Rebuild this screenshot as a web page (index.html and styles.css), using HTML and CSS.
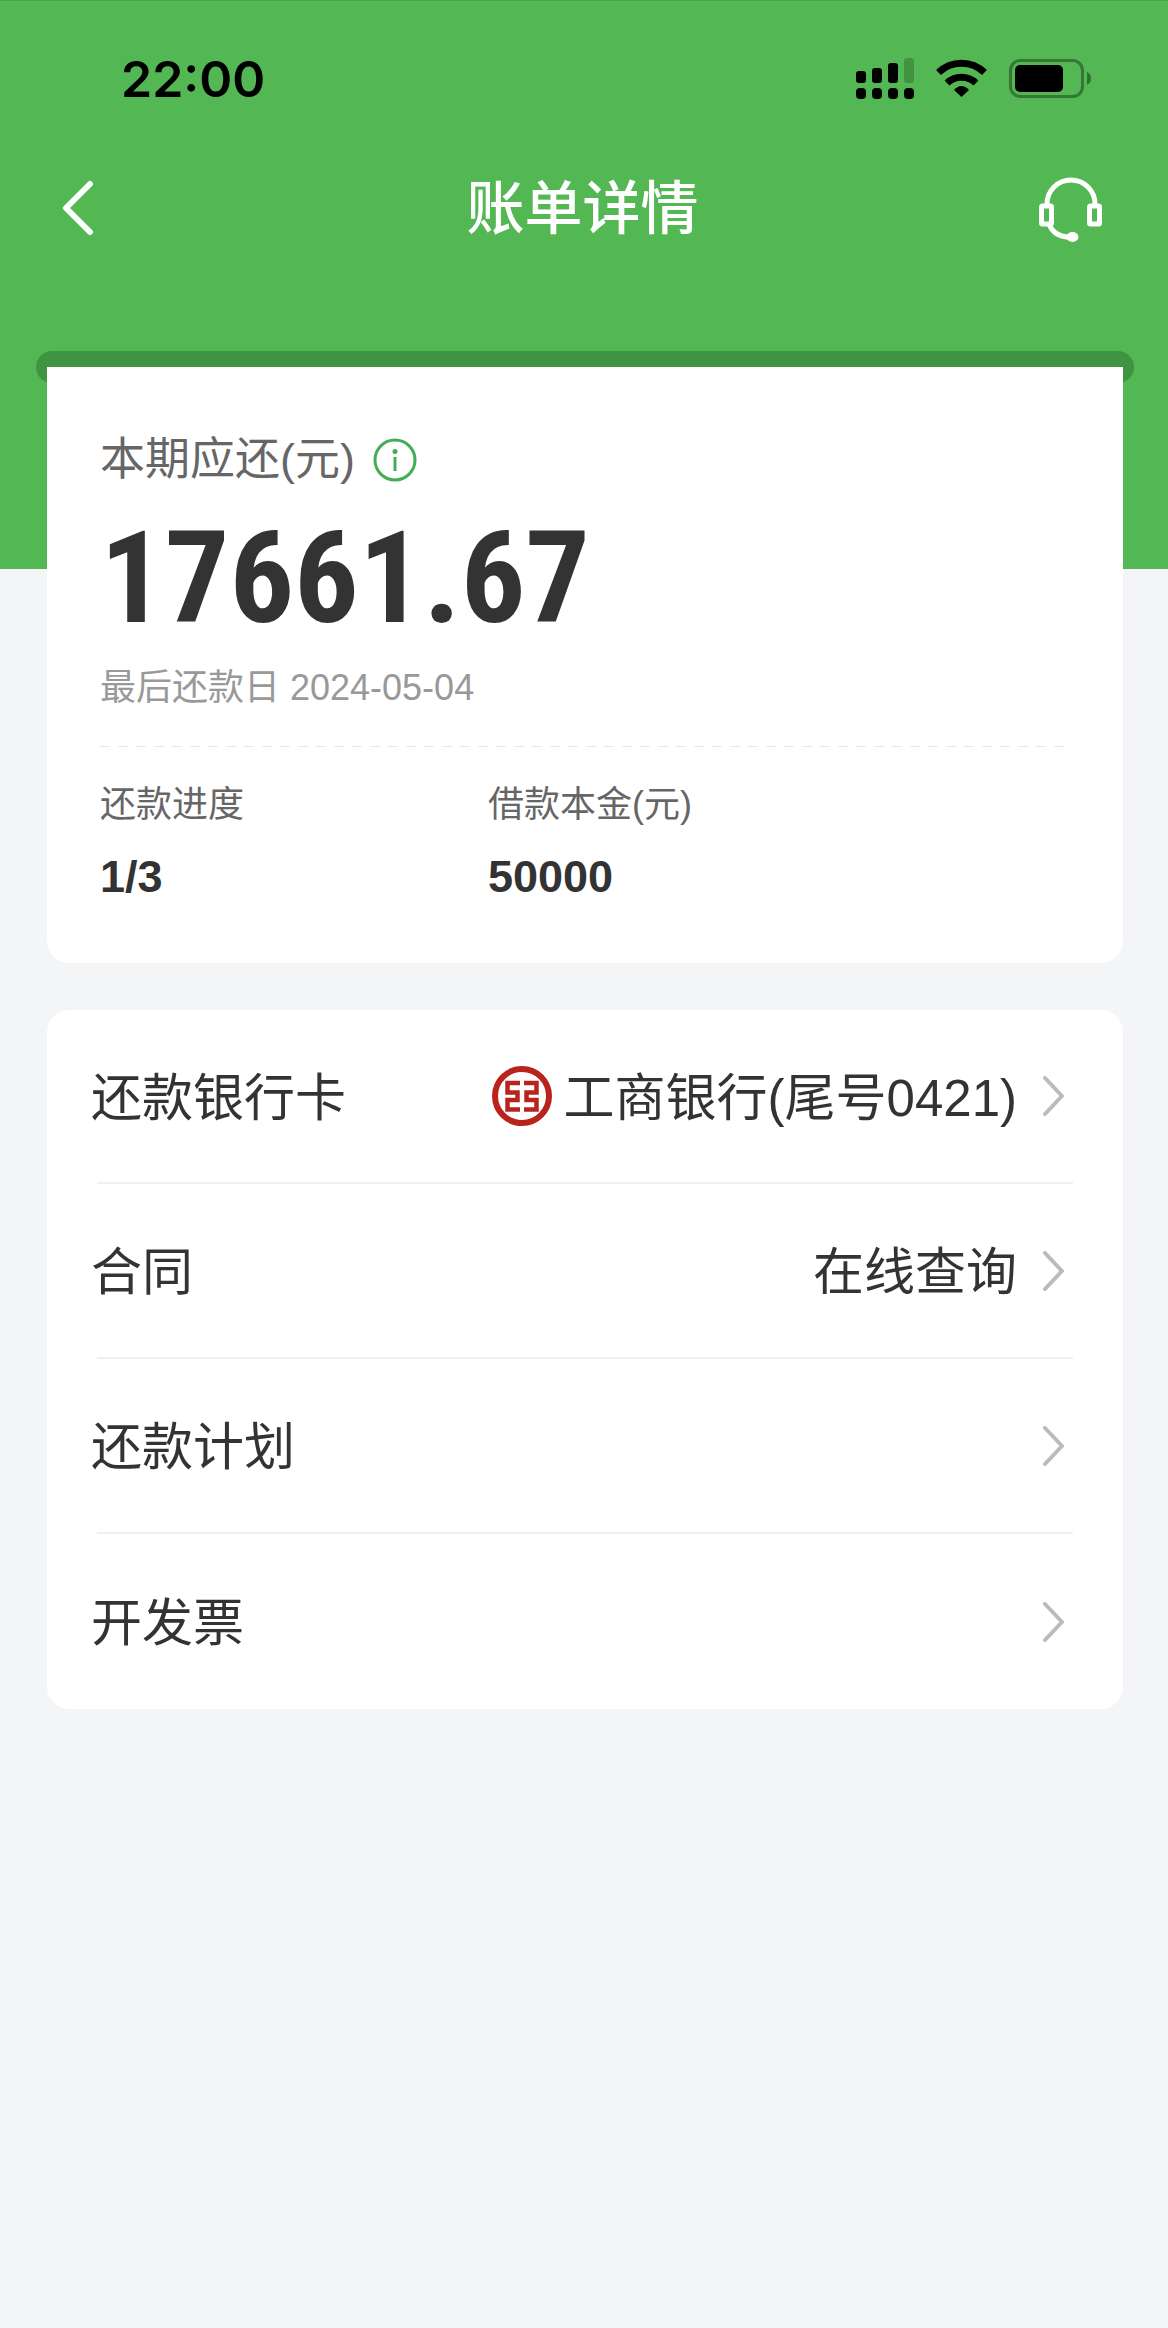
FILE: index.html
```html
<!DOCTYPE html>
<html lang="zh-CN">
<head>
    <meta charset="UTF-8">
    <meta name="viewport" content="width=device-width, initial-scale=1.0">
    <title>账单详情</title>
    <link rel="stylesheet" href="styles.css">
</head>
<body>
    <header class="header">
        <!-- Status bar -->
        <div class="status-bar">
            <span class="time">22:00</span>
            <div class="status-icons">
                <svg width="58" height="41" viewBox="0 0 58 41">
                    <rect x="0" y="13" width="10" height="12" rx="3"/>
                    <rect x="16" y="10" width="10" height="15" rx="3"/>
                    <rect x="32" y="5" width="10" height="20" rx="3"/>
                    <rect x="48" y="0" width="10" height="25" rx="3" opacity="0.2"/>
                    <rect x="0" y="30" width="10" height="11" rx="4"/>
                    <rect x="16" y="30" width="10" height="11" rx="4"/>
                    <rect x="32" y="30" width="10" height="11" rx="4"/>
                    <rect x="48" y="30" width="10" height="11" rx="4"/>
                </svg>
                <svg width="51" height="39" viewBox="0 0 51 39">
                    <path d="M2.5 13.5 A33 33 0 0 1 48.5 13.5" fill="none" stroke="#000" stroke-width="7"/>
                    <path d="M11 24 A21 21 0 0 1 40 24" fill="none" stroke="#000" stroke-width="7"/>
                    <path d="M25.5 38 L18 31 Q25.5 23 33 31 Z"/>
                </svg>
                <svg width="82" height="39" viewBox="0 0 82 39">
                    <rect x="1.5" y="1.5" width="72" height="36" rx="10" fill="none" stroke="#000" stroke-width="3" opacity="0.35"/>
                    <rect x="6" y="6" width="48" height="27" rx="5"/>
                    <path d="M78 13 Q82 15 82 19.5 Q82 24 78 26 Z" opacity="0.4"/>
                </svg>
            </div>
        </div>

        <!-- Navigation -->
        <nav class="nav-bar">
            <button class="nav-button" type="button" aria-label="返回">
                <svg width="32" height="56" viewBox="0 0 32 56" fill="none" stroke="#fff" stroke-width="6" stroke-linecap="round" stroke-linejoin="round">
                    <path d="M28 4 L4 28 L28 52"/>
                </svg>
            </button>
            <h1>账单详情</h1>
            <button class="nav-button nav-service" type="button" aria-label="客服">
                <svg width="64" height="70" viewBox="0 0 64 70" fill="none" stroke="#fff" stroke-width="5">
                    <path d="M8 32 V31 A24 24 0 0 1 56 31 V32"/>
                    <rect x="2.5" y="33" width="10" height="18" rx="1"/>
                    <rect x="50.5" y="33" width="10" height="18" rx="1"/>
                    <path d="M10 51 Q15 64 31 64"/>
                    <ellipse cx="33.500" cy="64" rx="6" ry="5" fill="#fff" stroke="none"/>
                </svg>
            </button>
        </nav>
        <div class="slot"></div>
    </header>

    <main class="content">
        <!-- Bill summary -->
        <section class="card bill-card">
            <h2 class="bill-label">
                本期应还(元)
                <svg width="44" height="44" viewBox="0 0 44 44">
                    <circle cx="22" cy="22" r="20" fill="none" stroke="#43ae55" stroke-width="3"/>
                    <circle cx="22" cy="13.5" r="2.5" fill="#43ae55"/>
                    <path d="M22 19 V33" stroke="#43ae55" stroke-width="3"/>
                </svg>
            </h2>
            <p class="amount">17661.67</p>
            <p class="due-date">最后还款日 2024-05-04</p>
            <dl class="stats">
                <div>
                    <dt>还款进度</dt>
                    <dd>1/3</dd>
                </div>
                <div>
                    <dt>借款本金(元)</dt>
                    <dd>50000</dd>
                </div>
            </dl>
        </section>

        <!-- Links -->
        <section class="card menu">
            <a href="#card" class="menu-item">
                <span class="menu-label">还款银行卡</span>
                <svg class="bank-logo" width="60" height="60" viewBox="0 0 60 60" fill="none" stroke="#b8241c">
                    <circle cx="30" cy="30" r="27" stroke-width="6"/>
                    <path stroke-width="4.5" d="M28 17 H15.500 V26.500 H25.500 V34 H15.500 V43.500 H28 M32 17 H44.500 V26.500 H34.500 V34 H44.500 V43.500 H32"/>
                </svg>
                <span class="menu-value">工商银行(尾号0421)</span>
                <svg class="arrow" width="22" height="40" viewBox="0 0 22 40"><path d="M2 2 L19 20 L2 38"/></svg>
            </a>
            <a href="#contract" class="menu-item">
                <span class="menu-label">合同</span>
                <span class="menu-value">在线查询</span>
                <svg class="arrow" width="22" height="40" viewBox="0 0 22 40"><path d="M2 2 L19 20 L2 38"/></svg>
            </a>
            <a href="#plan" class="menu-item">
                <span class="menu-label">还款计划</span>
                <svg class="arrow" width="22" height="40" viewBox="0 0 22 40"><path d="M2 2 L19 20 L2 38"/></svg>
            </a>
            <a href="#invoice" class="menu-item">
                <span class="menu-label">开发票</span>
                <svg class="arrow" width="22" height="40" viewBox="0 0 22 40"><path d="M2 2 L19 20 L2 38"/></svg>
            </a>
        </section>
    </main>
</body>
</html>
```
FILE: styles.css
```css
* {
    box-sizing: border-box;
    margin: 0;
    padding: 0;
}
body {
    font-family: "Liberation Sans", "Noto Sans CJK SC", sans-serif;
    background-color: #f4f5f7;
    color: #333;
    min-height: 100vh;
}
svg {
    display: block;
    flex-shrink: 0;
}

/* Header */
.header {
    background-color: #53b753;
    border-top: 1px solid #4ba54b;
    padding-bottom: 186px;
}
.status-bar {
    display: flex;
    justify-content: space-between;
    align-items: center;
    height: 155px;
    padding: 0 77px 0 121px;
}
.time {
    font-family: Inter, sans-serif;
    font-size: 50px;
    font-weight: 600;
    color: #000;
}
.status-icons {
    display: flex;
    align-items: center;
    gap: 22px;
}
.nav-bar {
    display: flex;
    justify-content: space-between;
    align-items: center;
    height: 104px;
    margin-bottom: 91px;
    padding: 0 65px 0 62px;
}
.nav-bar h1 {
    padding-bottom: 8px;
    font-size: 58px;
    font-weight: 500;
    color: #fff;
}
.nav-button {
    display: flex;
    width: 64px;
    background: none;
    border: none;
    cursor: pointer;
}
.nav-service {
    justify-content: flex-end;
}
.slot {
    height: 32px;
    margin: 0 34px 0 36px;
    border-radius: 16px;
    background-color: #409340;
}

/* Cards */
.content {
    display: flex;
    flex-direction: column;
    gap: 47px;
    margin-top: -202px;
    padding: 0 45px 0 47px;
}
.card {
    background-color: #fff;
    border-radius: 22px;
}
.bill-card {
    border-radius: 0 0 22px 22px;
    padding: 63px 53px 61px;
}
.bill-label {
    display: flex;
    align-items: center;
    gap: 18px;
    font-size: 45px;
    font-weight: 400;
    line-height: 60px;
    color: #666;
}
.amount {
    margin-top: 28px;
    font-family: "Roboto Condensed", Roboto, sans-serif;
    font-size: 128px;
    font-weight: 700;
    line-height: 120px;
}
.due-date {
    margin: 25px 0 33px;
    font-size: 36px;
    line-height: 50px;
    color: #999;
}
.stats {
    display: grid;
    grid-template-columns: 2fr 3fr;
    padding-top: 34px;
    background: repeating-linear-gradient(to right, #e6e6e6 0 10px, transparent 10px 18px) top / 100% 1px no-repeat;
}
.stats dt {
    margin-bottom: 22px;
    font-size: 36px;
    line-height: 50px;
    color: #666;
}
.stats dd {
    font-size: 45px;
    font-weight: 700;
    line-height: 50px;
}

/* Menu */
.menu {
    padding: 0 50px;
}
.menu-item {
    display: flex;
    align-items: center;
    height: 175px;
    padding-right: 8px;
    border-bottom: 2px solid #f0f0f0;
    font-size: 51px;
    color: #333;
    text-decoration: none;
}
.menu-item:first-child {
    height: 174px;
}
.menu-item:last-child {
    border-bottom: none;
}
.menu-label,
.menu-value {
    padding-bottom: 5px;
}
.menu-label {
    flex: 1;
    margin-left: -6px;
}
.bank-logo {
    margin-right: 12px;
}
.arrow {
    margin-left: 26px;
    fill: none;
    stroke: #bbb;
    stroke-width: 4;
    stroke-linecap: round;
    stroke-linejoin: round;
}
```
